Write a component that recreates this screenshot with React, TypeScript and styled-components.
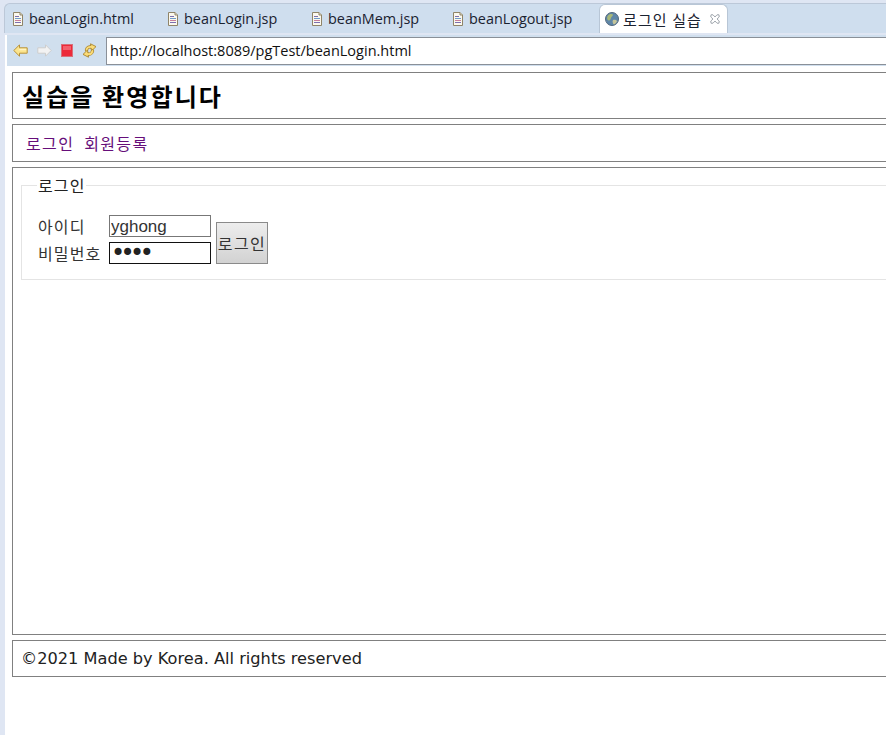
import styled, { createGlobalStyle } from "styled-components";

const GlobalStyle = createGlobalStyle`
  html, body {
    margin: 0;
    padding: 0;
    background: #dfe6f3;
    overflow: hidden;
  }
`;

function PageIcon() {
  return (
    <svg width="12" height="14" viewBox="0 0 12 14">
      <path d="M1.500.5h6.500l2.500 2.500v10.500h-9z" fill="#fbf8ee" stroke="#8f8468" />
      <path d="M8 .5v2.500h2.500" fill="#e8e0c8" stroke="#8f8468" />
      <path d="M3 4.500h4" stroke="#7b6fb0" />
      <path d="M3 6.500h6" stroke="#6f9bc8" />
      <path d="M3 8.500h6" stroke="#c87f9b" />
      <path d="M3 10.500h6" stroke="#7b6fb0" />
    </svg>
  );
}

function GlobeIcon() {
  return (
    <svg width="14" height="14" viewBox="0 0 14 14">
      <circle cx="7" cy="7" r="6.500" fill="#5f86a8" />
      <path d="M3 3.500c2-2 4-1.500 5-1 0 1.500-1.500 2-2 3.500s-1 3-2.500 2.500S1.500 5.500 3 3.500z" fill="#a8b878" />
      <path d="M8 8c1.500-.5 3.500 0 4 1-.5 2-2 3.500-3.500 3.500-.5-1.500-1.500-3-.5-4.500z" fill="#c4c49a" />
      <circle cx="7" cy="7" r="6.500" fill="none" stroke="#51677c" />
    </svg>
  );
}

function BackIcon() {
  return (
    <svg width="15" height="13" viewBox="0 0 15 13">
      <path d="M.8 6.500 6.500.8v3h7.700v5.400H6.500v3z" fill="#fbe48c" stroke="#b8923a" strokeLinejoin="round" />
      <path d="M7.500 4.800h5.700v1.500H5z" fill="#fff4c4" />
    </svg>
  );
}

function ForwardIcon() {
  return (
    <svg width="15" height="13" viewBox="0 0 15 13">
      <path d="M14.200 6.500 8.500.8v3H.8v5.400h7.700v3z" fill="#f2f2f2" stroke="#cdcdcd" strokeLinejoin="round" />
    </svg>
  );
}

function StopIcon() {
  return (
    <svg width="12" height="13" viewBox="0 0 12 13">
      <rect x=".5" y=".5" width="11" height="12" fill="#ec2a3a" stroke="#d8707a" />
      <rect x="2" y="2" width="8" height="4" fill="#f4606c" />
    </svg>
  );
}

function RefreshIcon() {
  return (
    <svg width="15" height="15" viewBox="0 0 15 15">
      <path d="M4.500 7C5 4.500 7 3.500 9 4" fill="none" stroke="#a8842e" strokeWidth="3.400" strokeLinecap="round" />
      <path d="M8.500.8 14 3.600 9.500 8z" fill="#fbdc78" stroke="#a8842e" strokeWidth=".9" strokeLinejoin="round" />
      <path d="M4.500 7C5 4.500 7 3.500 9.500 4" fill="none" stroke="#fbdc78" strokeWidth="1.800" strokeLinecap="round" />
      <path d="M10.500 8C10 10.500 8 11.500 6 11" fill="none" stroke="#a8842e" strokeWidth="3.400" strokeLinecap="round" />
      <path d="M6.500 14.200 1 11.400 5.500 7z" fill="#fbdc78" stroke="#a8842e" strokeWidth=".9" strokeLinejoin="round" />
      <path d="M10.500 8C10 10.500 8 11.500 5.500 11" fill="none" stroke="#fbdc78" strokeWidth="1.800" strokeLinecap="round" />
    </svg>
  );
}

function CloseIcon() {
  return (
    <svg width="10" height="10" viewBox="0 0 10 10">
      <path
        d="M1 .8 3 .8 5 3 7 .8 9 .8 9.200 3 7 5 9.200 7 9 9.200 7 9.200 5 7 3 9.200 1 9.200.8 7 3 5 .8 3z"
        fill="#fff"
        stroke="#8b939c"
        strokeWidth=".8"
      />
    </svg>
  );
}

export default function App() {
  return (
    <>
      <GlobalStyle />
      <Window>
        <TabBar>
          <Tab $width={155}>
            <PageIcon />
            <TabLabel>beanLogin.html</TabLabel>
          </Tab>
          <Tab $width={144}>
            <PageIcon />
            <TabLabel>beanLogin.jsp</TabLabel>
          </Tab>
          <Tab $width={141}>
            <PageIcon />
            <TabLabel>beanMem.jsp</TabLabel>
          </Tab>
          <Tab $width={147}>
            <PageIcon />
            <TabLabel>beanLogout.jsp</TabLabel>
          </Tab>
          <ActiveTab>
            <GlobeIcon />
            <ActiveLabel>로그인 실습</ActiveLabel>
            <CloseIcon />
          </ActiveTab>
        </TabBar>
        <Toolbar>
          <ToolIcons>
            <BackIcon />
            <ForwardIcon />
            <StopIcon />
            <RefreshIcon />
          </ToolIcons>
          <AddressBar>http://localhost:8089/pgTest/beanLogin.html</AddressBar>
        </Toolbar>
        <Page>
          <HeaderBox>
            <Title>실습을 환영합니다</Title>
          </HeaderBox>
          <NavBox>
            <NavLink href="#">로그인</NavLink>
            <NavLink href="#">회원등록</NavLink>
          </NavBox>
          <MainBox>
            <LoginFieldset>
              <Legend>로그인</Legend>
              <LoginForm>
                <Fields>
                  <FieldRow>
                    <FieldLabel>아이디</FieldLabel>
                    <TextInput defaultValue="yghong" />
                  </FieldRow>
                  <FieldRow>
                    <FieldLabel>비밀번호</FieldLabel>
                    <PasswordInput type="password" defaultValue="1234" />
                  </FieldRow>
                </Fields>
                <SubmitButton type="button">로그인</SubmitButton>
              </LoginForm>
            </LoginFieldset>
          </MainBox>
          <FooterBox>©2021 Made by Korea. All rights reserved</FooterBox>
        </Page>
      </Window>
    </>
  );
}

const Window = styled.div`
  width: 886px;
  height: 735px;
  overflow: hidden;
  display: flex;
  flex-direction: column;
  padding-top: 3px;
  box-sizing: border-box;
`;

const TabBar = styled.div`
  display: flex;
  height: 30px;
  flex-shrink: 0;
  margin-left: 4px;
  padding-left: 7px;
  background: #cfdeee;
  border-top: 1px solid #bcc8d8;
  border-left: 1px solid #bcc8d8;
  border-top-left-radius: 6px;
  box-sizing: border-box;
`;

const Tab = styled.div<{ $width: number }>`
  display: flex;
  align-items: center;
  gap: 5px;
  width: ${(props) => props.$width}px;
  flex-shrink: 0;
`;

const TabLabel = styled.span`
  font-family: "Open Sans", "Noto Sans", sans-serif;
  font-size: 14.4px;
  color: #1a2230;
  white-space: nowrap;
`;

const ActiveTab = styled.div`
  display: flex;
  align-items: center;
  gap: 4px;
  width: 129px;
  height: 29px;
  padding-left: 5px;
  box-sizing: border-box;
  background: #fff;
  border: 1px solid #b8c6d6;
  border-bottom: none;
  border-radius: 6px 6px 0 0;
`;

const ActiveLabel = styled.span`
  font-family: "Noto Sans CJK KR", sans-serif;
  font-size: 15px;
  letter-spacing: 1.1px;
  color: #1a2230;
  white-space: nowrap;
  margin-right: 4px;
`;

const Toolbar = styled.div`
  display: flex;
  align-items: center;
  height: 31px;
  flex-shrink: 0;
  margin-left: 5px;
  margin-top: 2px;
  padding-left: 6px;
  background: #d0dfee;
  border-left: 2px solid #fff;
`;

const ToolIcons = styled.div`
  display: flex;
  align-items: center;
  gap: 9px;
  width: 93px;
  flex-shrink: 0;
`;

const AddressBar = styled.div`
  flex: 1;
  height: 28px;
  box-sizing: border-box;
  padding-left: 3px;
  background: #fff;
  border: 1px solid #8a9098;
  border-right: none;
  font-family: "Open Sans", "Noto Sans", sans-serif;
  font-size: 14.5px;
  line-height: 26px;
  color: #111;
`;

const Page = styled.div`
  flex: 1;
  margin-left: 5px;
  padding: 6px 0 0 7px;
  background: #fff;
  display: flex;
  flex-direction: column;
  gap: 5px;
  font-family: "Noto Sans CJK KR", sans-serif;
`;

const Box = styled.div`
  width: 900px;
  box-sizing: border-box;
  border: 1px solid #808080;
  flex-shrink: 0;
`;

const HeaderBox = styled(Box)`
  height: 47px;
  padding-left: 9px;
  display: flex;
  align-items: center;
`;

const Title = styled.h1`
  margin: 0;
  font-family: "Noto Sans CJK KR", sans-serif;
  font-size: 24px;
  font-weight: 700;
  letter-spacing: 2.1px;
  color: #000;
`;

const NavBox = styled(Box)`
  height: 38px;
  padding-left: 13px;
  display: flex;
  align-items: center;
  gap: 10px;
`;

const NavLink = styled.a`
  font-size: 16px;
  letter-spacing: 1.35px;
  color: #660e7a;
  text-decoration: none;
`;

const MainBox = styled(Box)`
  height: 468px;
  padding: 8px;
`;

const LoginFieldset = styled.fieldset`
  margin: 0;
  padding: 21px 0 10px 15px;
  height: 104px;
  box-sizing: border-box;
  border: 1px solid #e4e4e4;
`;

const Legend = styled.legend`
  padding: 0 1px;
  font-size: 16px;
  letter-spacing: 1.1px;
  line-height: 18px;
  color: #222;
`;

const LoginForm = styled.form`
  display: flex;
  align-items: flex-end;
  gap: 5px;
`;

const Fields = styled.div`
  display: flex;
  flex-direction: column;
  gap: 5px;
`;

const FieldRow = styled.div`
  display: flex;
  align-items: center;
  height: 22px;
`;

const FieldLabel = styled.label`
  width: 71px;
  margin-left: 1px;
  font-size: 16px;
  letter-spacing: 1.1px;
  color: #333;
`;

const TextInput = styled.input`
  width: 102px;
  height: 22px;
  box-sizing: border-box;
  padding: 1px 1px 0;
  background: #fff;
  border: 1px solid #777;
  border-radius: 0;
  outline: none;
  font-family: "Liberation Sans", sans-serif;
  font-size: 17px;
  color: #333;
`;

const PasswordInput = styled(TextInput)`
  padding: 0 1px;
  border-color: #111;
  font-family: "DejaVu Sans", sans-serif;
  font-size: 24px;
  letter-spacing: -4.6px;
  color: #222;
`;

const SubmitButton = styled.button`
  width: 52px;
  height: 42px;
  padding: 0;
  background: linear-gradient(#ededed, #d2d2d2);
  border: 1px solid #8a8a8a;
  border-radius: 0;
  font-family: "Noto Sans CJK KR", sans-serif;
  font-size: 16px;
  letter-spacing: 1.4px;
  white-space: nowrap;
  color: #333;
`;

const FooterBox = styled(Box)`
  height: 37px;
  padding-left: 8px;
  display: flex;
  align-items: center;
  font-family: "DejaVu Sans", sans-serif;
  font-size: 16.2px;
  color: #222;
`;
